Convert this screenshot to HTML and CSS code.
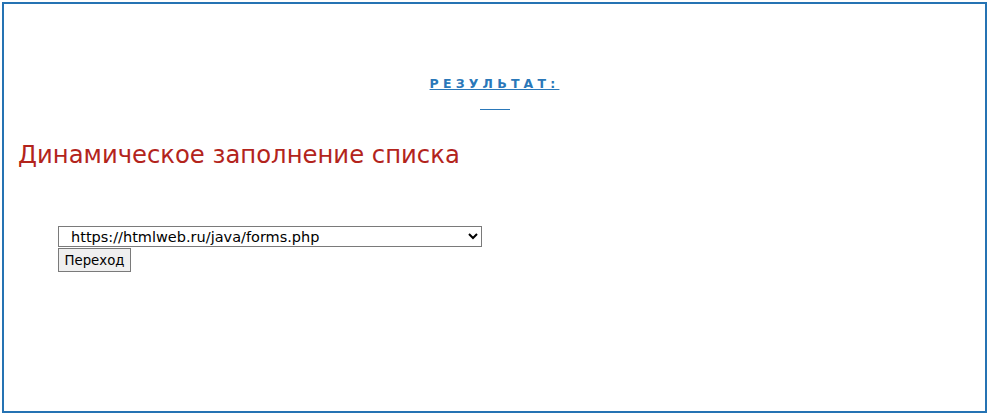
FILE: index.html
```html
<!DOCTYPE html>
<html lang="ru">
<head>
<meta charset="utf-8">
<link rel="stylesheet" href="styles.css">
</head>
<body>
<div class="frame">
  <div class="result">
    <a class="result-title" href="#">РЕЗУЛЬТАТ:</a>
    <div class="result-line"></div>
  </div>
  <h1 class="heading">Динамическое заполнение списка</h1>
  <form class="nav-form">
    <select class="nav-select">
      <option>https://htmlweb.ru/java/forms.php</option>
    </select>
    <button type="button" class="nav-button">Переход</button>
  </form>
</div>
</body>
</html>
```
FILE: styles.css
```css
html, body {
  margin: 0;
  padding: 0;
  background: #fff;
}
body {
  padding: 2px;
  font-family: "DejaVu Sans", Verdana, sans-serif;
}
.frame {
  box-sizing: border-box;
  width: 985px;
  height: 411px;
  border: 2px solid #2573b3;
  padding: 0 0 0 14px;
}
.result {
  display: flex;
  flex-direction: column;
  align-items: center;
  padding-top: 72px;
  margin-left: -14px;
}
.result-title {
  font-family: "DejaVu Sans", Verdana, sans-serif;
  font-weight: bold;
  font-size: 12.5px;
  letter-spacing: 4.2px;
  color: #2a78b9;
  text-decoration: underline;
  line-height: 16px;
}
.result-line {
  width: 30px;
  height: 1px;
  background: #2a78b9;
  margin-top: 17px;
}
.heading {
  font-family: "DejaVu Sans", Verdana, sans-serif;
  font-weight: normal;
  font-size: 24.3px;
  color: #b3241c;
  margin: 29px 0 0 0;
  line-height: 32px;
}
.nav-form {
  display: flex;
  flex-direction: column;
  align-items: flex-start;
  margin: 55px 0 0 40px;
}
.nav-select {
  width: 424px;
  height: 21px;
  font-family: "DejaVu Sans", sans-serif;
  font-size: 14.5px;
  border: 1px solid #7a7a7a;
  border-radius: 0;
  background: #fff;
  color: #000;
  padding: 0 0 0 8px;
}
.nav-button {
  margin-top: 1px;
  height: 24px;
  font-family: "DejaVu Sans", sans-serif;
  font-size: 13.3px;
  border: 1px solid #7a7a7a;
  background: #efefef;
  border-radius: 0;
  padding: 0 5.5px;
}
```
